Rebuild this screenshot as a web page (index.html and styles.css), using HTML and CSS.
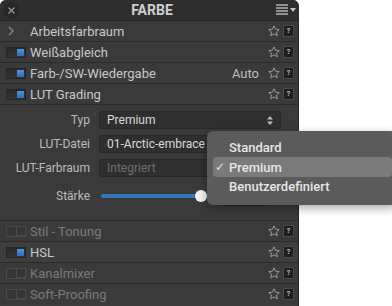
FILE: index.html
```html
<!DOCTYPE html>
<html lang="de">
<head>
    <meta charset="UTF-8">
    <title>Farbe</title>
    <link rel="stylesheet" href="styles.css">
</head>
<body>
    <div class="panel">
        <div class="header">
            <span class="close">
                <svg width="17" height="17" viewBox="0 0 17 17"><circle cx="8.5" cy="8.5" r="8" fill="#262626"/><path d="M5.5 5.5l6 6M11.5 5.5l-6 6" stroke="#9a9a9a" stroke-width="1.2"/></svg>
            </span>
            <span class="title">FARBE</span>
            <span class="menu">
                <svg width="20" height="12" viewBox="0 0 20 12"><path d="M0 1h12M0 4h12M0 7h12M0 10h12" stroke="#b4b4b4" stroke-width="1.3"/><path d="M14 4h6l-3 4z" fill="#c4c4c4"/></svg>
            </span>
        </div>

        <div class="row">
            <span class="chevron"><svg width="8" height="10" viewBox="0 0 8 10"><path d="M2 1l4 4-4 4" stroke="#8a8a8a" stroke-width="1.3" fill="none"/></svg></span>
            <span class="label">Arbeitsfarbraum</span>
            <span class="tools"><svg class="star" width="12" height="12" viewBox="0 0 12 12"><path d="M6 0.8l1.55 3.4 3.7.4-2.75 2.5.8 3.65L6 8.9 2.7 10.75l.8-3.65L.75 4.6l3.7-.4z" fill="none" stroke="#9a9a9a" stroke-width="1"/></svg><span class="help">?</span></span>
        </div>
        <div class="row">
            <span class="toggle on"></span>
            <span class="label">Weißabgleich</span>
            <span class="tools"><svg class="star" width="12" height="12" viewBox="0 0 12 12"><path d="M6 0.8l1.55 3.4 3.7.4-2.75 2.5.8 3.65L6 8.9 2.7 10.75l.8-3.65L.75 4.6l3.7-.4z" fill="none" stroke="#9a9a9a" stroke-width="1"/></svg><span class="help">?</span></span>
        </div>
        <div class="row">
            <span class="toggle on"></span>
            <span class="label">Farb-/SW-Wiedergabe</span>
            <span class="value">Auto</span>
            <span class="tools"><svg class="star" width="12" height="12" viewBox="0 0 12 12"><path d="M6 0.8l1.55 3.4 3.7.4-2.75 2.5.8 3.65L6 8.9 2.7 10.75l.8-3.65L.75 4.6l3.7-.4z" fill="none" stroke="#9a9a9a" stroke-width="1"/></svg><span class="help">?</span></span>
        </div>
        <div class="row">
            <span class="toggle on"></span>
            <span class="label">LUT Grading</span>
            <span class="tools"><svg class="star" width="12" height="12" viewBox="0 0 12 12"><path d="M6 0.8l1.55 3.4 3.7.4-2.75 2.5.8 3.65L6 8.9 2.7 10.75l.8-3.65L.75 4.6l3.7-.4z" fill="none" stroke="#9a9a9a" stroke-width="1"/></svg><span class="help">?</span></span>
        </div>

        <div class="section">
            <span class="field-label">Typ</span>
            <div class="select">Premium
                <svg class="updown" width="6" height="9" viewBox="0 0 6 9"><path d="M0 3.5L3 0l3 3.5zM0 5.5L3 9l3-3.5z" fill="#bdbdbd"/></svg>
            </div>
            <span class="field-label">LUT-Datei</span>
            <div class="select">01-Arctic-embrace</div>
            <span class="field-label">LUT-Farbraum</span>
            <div class="select dim">Integriert</div>
            <span class="field-label">Stärke</span>
            <div class="slider-line">
                <div class="slider">
                    <div class="fill"></div>
                    <div class="knob"></div>
                </div>
                <div class="number"></div>
                <div class="stepper">▾</div>
            </div>
        </div>

        <div class="row off">
            <span class="toggle"></span>
            <span class="label">Stil - Tonung</span>
            <span class="tools"><svg class="star" width="12" height="12" viewBox="0 0 12 12"><path d="M6 0.8l1.55 3.4 3.7.4-2.75 2.5.8 3.65L6 8.9 2.7 10.75l.8-3.65L.75 4.6l3.7-.4z" fill="none" stroke="#9a9a9a" stroke-width="1"/></svg><span class="help">?</span></span>
        </div>
        <div class="row hover">
            <span class="toggle on"></span>
            <span class="label">HSL</span>
            <span class="tools"><svg class="star" width="12" height="12" viewBox="0 0 12 12"><path d="M6 0.8l1.55 3.4 3.7.4-2.75 2.5.8 3.65L6 8.9 2.7 10.75l.8-3.65L.75 4.6l3.7-.4z" fill="none" stroke="#9a9a9a" stroke-width="1"/></svg><span class="help">?</span></span>
        </div>
        <div class="row off">
            <span class="toggle"></span>
            <span class="label">Kanalmixer</span>
            <span class="tools"><svg class="star" width="12" height="12" viewBox="0 0 12 12"><path d="M6 0.8l1.55 3.4 3.7.4-2.75 2.5.8 3.65L6 8.9 2.7 10.75l.8-3.65L.75 4.6l3.7-.4z" fill="none" stroke="#9a9a9a" stroke-width="1"/></svg><span class="help">?</span></span>
        </div>
        <div class="row off last">
            <span class="toggle"></span>
            <span class="label">Soft-Proofing</span>
            <span class="tools"><svg class="star" width="12" height="12" viewBox="0 0 12 12"><path d="M6 0.8l1.55 3.4 3.7.4-2.75 2.5.8 3.65L6 8.9 2.7 10.75l.8-3.65L.75 4.6l3.7-.4z" fill="none" stroke="#9a9a9a" stroke-width="1"/></svg><span class="help">?</span></span>
        </div>
    </div>

    <div class="popup">
        <div class="item">Standard</div>
        <div class="item selected"><span class="check">✓</span>Premium</div>
        <div class="item">Benutzerdefiniert</div>
    </div>
</body>
</html>
```

FILE: styles.css
```css
body {
    margin: 0;
    background: #ffffff;
    font-family: Roboto, "Liberation Sans", sans-serif;
    overflow: hidden;
}

.panel {
    width: 298px;
    height: 306px;
    background: #3a3a3a;
    border-right: 1px solid #2a2a2a;
    border-radius: 6px 6px 0 0;
    overflow: hidden;
}

.header {
    height: 20px;
    display: flex;
    align-items: center;
    justify-content: space-between;
    padding: 0 2px 0 3px;
    background: #2e2e2e;
    border-bottom: 1px solid #262626;
}

.close {
    display: flex;
    width: 17px;
}

.title {
    font-weight: 700;
    font-size: 14px;
    color: #cfcfcf;
    padding-left: 8px;
}

.menu {
    display: flex;
}

.row {
    height: 20px;
    display: flex;
    align-items: center;
    padding: 0 4px 0 6px;
    border-bottom: 1px solid #2b2b2b;
    color: #c9c9c9;
    font-size: 13px;
}

.row.hover {
    background: #3e3e3e;
}

.row.off {
    color: #7a7a7a;
}

.row.last {
    border-bottom: none;
}

.chevron {
    display: flex;
    width: 23px;
    padding-left: 1px;
}

.toggle {
    width: 18px;
    height: 9px;
    margin-right: 4px;
    border: 1px solid #262626;
    background: linear-gradient(#2a2a2a, #333333);
    position: relative;
}

.toggle::after {
    content: "";
    position: absolute;
    right: 0;
    top: 0;
    width: 8px;
    height: 8px;
    border: 1px solid #1e1e1e;
    border-top: none;
    border-right: none;
}

.toggle.on::after {
    background: linear-gradient(#4f94dc, #2e6cb4);
    border: none;
    right: 1px;
    top: 1px;
    width: 7px;
    height: 7px;
}

.row.off .toggle {
    border-color: #4a4a4a;
    background: #363636;
}

.row.off .toggle::after {
    border-color: #4a4a4a;
}

.label {
    flex: 1;
}

.value {
    margin-right: 9px;
    color: #bdbdbd;
}

.tools {
    display: flex;
    align-items: center;
    gap: 3px;
}

.help {
    width: 9px;
    height: 10px;
    background: #1e1e1e;
    border: 1px solid #4a4a4a;
    color: #c4c4c4;
    font-size: 7px;
    font-weight: 700;
    line-height: 10px;
    text-align: center;
}

.section {
    display: grid;
    grid-template-columns: 90px 182px;
    column-gap: 9px;
    row-gap: 6px;
    align-items: center;
    padding: 6px 0 14px;
    border-bottom: 1px solid #2b2b2b;
    height: 95px;
}

.field-label {
    text-align: right;
    font-size: 12px;
    color: #bcbcbc;
}

.select {
    height: 18px;
    display: flex;
    align-items: center;
    justify-content: space-between;
    padding: 0 7px;
    background: #2f2f2f;
    border: 1px solid #272727;
    border-radius: 3px;
    font-size: 12px;
    color: #dadada;
    box-sizing: border-box;
}

.select.dim {
    color: #6e6e6e;
}

.slider-line {
    display: flex;
    align-items: center;
    height: 26px;
}

.slider {
    width: 106px;
    height: 4px;
    margin-left: 2px;
    position: relative;
    background: #2a2a2a;
    border-radius: 2px;
}

.fill {
    width: 100px;
    height: 4px;
    background: #3476bc;
    border-radius: 2px;
}

.knob {
    position: absolute;
    left: 94px;
    top: -4px;
    width: 12px;
    height: 12px;
    background: #f4f4f4;
    border-radius: 50%;
}

.number {
    width: 44px;
    height: 17px;
    margin-left: 14px;
    background: #2f2f2f;
    border: 1px solid #272727;
    border-radius: 2px;
}

.stepper {
    width: 10px;
    height: 14px;
    margin-left: 4px;
    margin-top: 4px;
    background: #242424;
    color: #aaa;
    font-size: 8px;
    text-align: center;
    line-height: 20px;
}

.popup {
    position: absolute;
    left: 207px;
    top: 131px;
    width: 190px;
    height: 74px;
    padding-top: 7px;
    box-sizing: border-box;
    background: #5b5b5b;
    border-radius: 6px;
    box-shadow: 0 3px 10px rgba(0, 0, 0, 0.35);
}

.item {
    height: 19px;
    margin: 0 5px 0 6px;
    padding-left: 16px;
    display: flex;
    align-items: center;
    font-size: 13px;
    font-weight: 500;
    color: #e6e6e6;
    border-radius: 4px;
}

.item.selected {
    height: 20px;
    background: #7a7a7a;
    padding-left: 2px;
}

.check {
    width: 14px;
    font-family: "DejaVu Sans", sans-serif;
    font-size: 12px;
}
```
